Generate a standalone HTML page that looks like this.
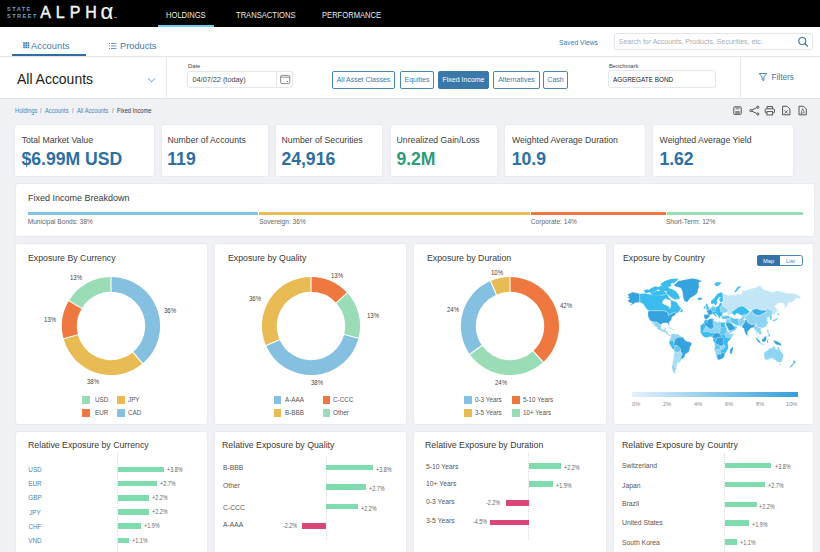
<!DOCTYPE html>
<html><head><meta charset="utf-8">
<style>
*{margin:0;padding:0;box-sizing:border-box}
html,body{width:820px;height:552px;overflow:hidden}
body{background:#eff1f5;font-family:"Liberation Sans",sans-serif;position:relative;color:#333}
.a{position:absolute;white-space:nowrap}
#hdr{left:0;top:0;width:820px;height:27px;background:#000}
.nav{color:#ececec;font-size:8.3px;top:10px;transform:scaleX(0.915);transform-origin:0 0}
#tabs{left:0;top:27px;width:820px;height:30px;background:#fff;border-bottom:1px solid #e1e4e8}
#fbar{left:0;top:57px;width:820px;height:42px;background:#fff;border-bottom:1px solid #dfe2e7}
.card{position:absolute;background:#fff;border:1px solid #e8ebef;border-radius:3px}
.kl{top:135px;font-size:8.7px;color:#3d3d3d}
.kv{top:148.5px;font-size:17.6px;color:#2d6fa2;font-weight:bold}
.ttl{font-size:9px;color:#333}
.bc{top:107px;font-size:6.3px;transform:scaleX(0.91);transform-origin:0 0}
.bl{top:217.5px;font-size:6.6px;color:#666}
.ct{top:253px;font-size:9.2px;color:#3a3a3a;transform:scaleX(0.953);transform-origin:0 0}
.dl{width:30px;text-align:center;font-size:6.9px;line-height:9px;color:#444;transform:scaleX(0.88)}
.lg{font-size:7.1px;line-height:9px;color:#555;transform:scaleX(0.89);transform-origin:0 0}
.ml{top:399.5px;font-size:6px;line-height:8px;color:#8a8a8a;transform:scaleX(0.95);transform-origin:0 0}
.rl{font-size:7.9px;line-height:9px;color:#555;transform:scaleX(0.86);transform-origin:0 0}
.rlc{width:30px;text-align:center;font-size:7.5px;line-height:9px;color:#4a84b5;transform:scaleX(0.84)}
.vl{font-size:6.4px;line-height:8px;color:#666;transform:scaleX(0.85);transform-origin:0 0}
.btn{position:absolute;top:71px;height:18px;border:1px solid #4a86b4;border-radius:2px;color:#3a78ad;font-size:7px;line-height:16px;text-align:center}
</style></head><body>
<div id="hdr" class="a"></div>
<div class="a" style="left:7px;top:6px;font-size:5.6px;line-height:6.6px;color:#6ea3c4;font-weight:bold;letter-spacing:1.45px">STATE<br>STREET</div>
<div class="a" style="left:40.3px;top:3.5px;font-size:16px;line-height:17px;color:#f4f4f4;-webkit-text-stroke:0.45px #f4f4f4;letter-spacing:4.9px">ALPH</div>
<div class="a" style="left:100.5px;top:0.5px;font-size:22px;line-height:22px;color:#f4f4f4;-webkit-text-stroke:0.2px #f4f4f4">&#945;</div>
<div class="a" style="left:114px;top:17px;width:3px;height:1px;background:#777"></div>
<div class="a nav" style="left:166px">HOLDINGS</div>
<div class="a nav" style="left:235.5px">TRANSACTIONS</div>
<div class="a nav" style="left:322px">PERFORMANCE</div>
<div class="a" style="left:158px;top:24.6px;width:56px;height:2.4px;background:#6ccaf2"></div>
<div id="tabs" class="a"></div>
<svg class="a" style="left:23px;top:42.4px" width="7" height="7" viewBox="0 0 7 7" fill="#3b7cb3"><rect x="0.20" y="0.20" width="1.7" height="1.7"/><rect x="0.20" y="2.35" width="1.7" height="1.7"/><rect x="0.20" y="4.50" width="1.7" height="1.7"/><rect x="2.35" y="0.20" width="1.7" height="1.7"/><rect x="2.35" y="2.35" width="1.7" height="1.7"/><rect x="2.35" y="4.50" width="1.7" height="1.7"/><rect x="4.50" y="0.20" width="1.7" height="1.7"/><rect x="4.50" y="2.35" width="1.7" height="1.7"/><rect x="4.50" y="4.50" width="1.7" height="1.7"/></svg>
<div class="a" style="left:31px;top:39.5px;font-size:9.8px;color:#3b7cb3;transform:scaleX(0.953);transform-origin:0 0">Accounts</div>
<div class="a" style="left:12px;top:53.5px;width:74px;height:2.5px;background:#2f6ea5"></div>
<svg class="a" style="left:108.5px;top:42.5px" width="8" height="6" viewBox="0 0 8 6" fill="#5b8fbd"><rect x="0" y="0" width="1" height="1"/><rect x="0" y="2.5" width="1" height="1"/><rect x="0" y="5" width="1" height="1"/><rect x="2" y="0" width="5.5" height="0.9"/><rect x="2" y="2.5" width="5.5" height="0.9"/><rect x="2" y="5" width="5.5" height="0.9"/></svg>
<div class="a" style="left:119.5px;top:39.5px;font-size:9.8px;color:#3b7cb3;transform:scaleX(0.943);transform-origin:0 0">Products</div>
<div class="a" style="left:558.5px;top:38px;font-size:7.6px;color:#3b7cb3;transform:scaleX(0.89);transform-origin:0 0">Saved Views</div>
<div class="a" style="left:614.3px;top:32.5px;width:198.5px;height:17.6px;border:1px solid #e3e6ea;border-radius:3px"></div>
<div class="a" style="left:618.8px;top:37.6px;font-size:7px;color:#a9adb2">Search for Accounts, Products, Securities, etc.</div>
<svg class="a" style="left:796px;top:35px" width="13" height="13" viewBox="0 0 13 13"><circle cx="6.3" cy="6" r="3.5" fill="none" stroke="#3a78ad" stroke-width="1.15"/><line x1="8.9" y1="8.6" x2="11.4" y2="11" stroke="#3a78ad" stroke-width="1.3" stroke-linecap="round"/></svg>
<div id="fbar" class="a"></div>
<div class="a" style="left:166px;top:57px;width:1px;height:42px;background:#e6e9ed"></div>
<div class="a" style="left:740px;top:57px;width:1px;height:42px;background:#e6e9ed"></div>
<div class="a" style="left:17px;top:70px;font-size:15.5px;color:#222;transform:scaleX(0.9);transform-origin:0 0">All Accounts</div>
<svg class="a" style="left:146px;top:75px" width="11" height="8" viewBox="0 0 11 8"><polyline points="2,3.2 5.6,6.8 9.2,3.2" fill="none" stroke="#4a86b4" stroke-width="0.85"/></svg>
<div class="a" style="left:188px;top:62.5px;font-size:5.8px;color:#444">Date</div>
<div class="a" style="left:187.3px;top:70.8px;width:105.9px;height:17.6px;border:1px solid #e3e6ea;border-radius:3px"></div>
<div class="a" style="left:276px;top:71px;width:1px;height:17.4px;background:#e6e8ec"></div>
<div class="a" style="left:192.5px;top:75px;font-size:7.3px;color:#444">04/07/22 (today)</div>
<svg class="a" style="left:279px;top:73px" width="12" height="12" viewBox="0 0 12 12"><rect x="1.6" y="2.4" width="9.2" height="8.2" rx="1.3" fill="none" stroke="#707070" stroke-width="0.8"/><line x1="1.6" y1="4.2" x2="10.8" y2="4.2" stroke="#707070" stroke-width="0.8"/><rect x="7.6" y="8" width="1.4" height="0.9" fill="#606060"/></svg>
<div class="btn" style="left:332px;width:63px">All Asset Classes</div>
<div class="btn" style="left:400px;width:34px">Equities</div>
<div class="btn" style="left:438px;width:51px;background:#3a78aa;border-color:#3a78aa;color:#fff">Fixed Income</div>
<div class="btn" style="left:493px;width:47px">Alternatives</div>
<div class="btn" style="left:543px;width:25px">Cash</div>
<div class="a" style="left:609px;top:62.5px;font-size:5.8px;color:#444">Benchmark</div>
<div class="a" style="left:608.3px;top:70.2px;width:107.5px;height:18px;border:1px solid #e3e6ea;border-radius:3px"></div>
<div class="a" style="left:613.2px;top:74.8px;font-size:7.5px;color:#222;transform:scaleX(0.85);transform-origin:0 0">AGGREGATE BOND</div>
<svg class="a" style="left:758px;top:72px" width="10" height="10" viewBox="0 0 10 10"><path d="M1.2 1.5 H8.8 L5.9 5 V8.6 L4.1 7.6 V5 Z" fill="none" stroke="#3a78ad" stroke-width="0.9" stroke-linejoin="round"/></svg>
<div class="a" style="left:771.5px;top:72.8px;font-size:8.2px;color:#3a78ad">Filters</div>

<!-- breadcrumb -->
<div class="a bc" style="left:14.6px;color:#4a84b5">Holdings</div>
<div class="a bc" style="left:40px;color:#777">/</div>
<div class="a bc" style="left:45.1px;color:#4a84b5">Accounts</div>
<div class="a bc" style="left:72.4px;color:#777">/</div>
<div class="a bc" style="left:77.1px;color:#4a84b5">All Accounts</div>
<div class="a bc" style="left:112.1px;color:#777">/</div>
<div class="a bc" style="left:117px;color:#333">Fixed Income</div>
<!-- toolbar icons -->
<svg class="a" style="left:732px;top:105px" width="78" height="11" viewBox="0 0 78 11">
 <g fill="none" stroke="#555" stroke-width="1">
  <rect x="1.8" y="1.8" width="7.4" height="7.6" rx="0.8"/>
  <rect x="3.5" y="1.8" width="4" height="2.6" fill="#999" stroke="none"/>
  <rect x="3.3" y="6" width="4.4" height="3.4" fill="#888" stroke="none"/>
  <circle cx="18.8" cy="5.6" r="1.1"/><circle cx="25.8" cy="2.2" r="1.1"/><circle cx="25.8" cy="9" r="1.1"/>
  <line x1="19.8" y1="5" x2="24.8" y2="2.7"/><line x1="19.8" y1="6.2" x2="24.8" y2="8.5"/>
  <path d="M35 3.8 V1.6 H40.6 V3.8"/><rect x="33.2" y="3.8" width="9.2" height="4.2" rx="1"/><rect x="35" y="6.6" width="5.6" height="3.3" fill="#fff"/>
  <path d="M50.6 1.3 H55.2 L57.9 4 V9.8 H50.6 Z"/><path d="M52.4 5.2 L55.8 8.6 M55.8 5.2 L52.4 8.6" stroke-width="0.8"/>
  <path d="M67 1.3 H71.6 L74.3 4 V9.8 H67 Z"/><path d="M70.6 3.5 L69 8.6 L72.4 7.4 Z" stroke-width="0.7"/>
 </g>
</svg>

<!-- KPI cards -->
<div class="card" style="left:14px;top:124px;width:141px;height:53px"></div>
<div class="card" style="left:161px;top:124px;width:108px;height:53px"></div>
<div class="card" style="left:275px;top:124px;width:108px;height:53px"></div>
<div class="card" style="left:390px;top:124px;width:108px;height:53px"></div>
<div class="card" style="left:504px;top:124px;width:142px;height:53px"></div>
<div class="card" style="left:652px;top:124px;width:142px;height:53px"></div>

<div class="a kl" style="left:21.7px">Total Market Value</div>
<div class="a kv" style="left:21.5px">$6.99M USD</div>
<div class="a kl" style="left:167.5px">Number of Accounts</div>
<div class="a kv" style="left:167.3px">119</div>
<div class="a kl" style="left:281.6px">Number of Securities</div>
<div class="a kv" style="left:281.4px">24,916</div>
<div class="a kl" style="left:396.6px">Unrealized Gain/Loss</div>
<div class="a kv" style="left:396.4px;color:#2e9a78">9.2M</div>
<div class="a kl" style="left:512px">Weighted Average Duration</div>
<div class="a kv" style="left:511.8px">10.9</div>
<div class="a kl" style="left:659.6px">Weighted Average Yield</div>
<div class="a kv" style="left:659.4px">1.62</div>

<div class="card" style="left:15px;top:183px;width:800px;height:54px"></div>
<div class="a" style="left:27.7px;top:192px;font-size:9.4px;color:#3a3a3a;transform:scaleX(0.96);transform-origin:0 0">Fixed Income Breakdown</div>
<div class="a" style="left:27.7px;top:212px;width:230.5px;height:3px;background:#85c1e3"></div>
<div class="a" style="left:259px;top:212px;width:270.5px;height:3px;background:#e8bb55"></div>
<div class="a" style="left:530.8px;top:212px;width:135.2px;height:3px;background:#ee7840"></div>
<div class="a" style="left:667.4px;top:212px;width:135.5px;height:3px;background:#99dcb6"></div>
<div class="a bl" style="left:27.7px">Municipal Bonds: 38%</div>
<div class="a bl" style="left:259.2px">Sovereign: 36%</div>
<div class="a bl" style="left:530.8px">Corporate: 14%</div>
<div class="a bl" style="left:665.9px">Short-Term: 12%</div>

<div class="card" style="left:15px;top:243px;width:193px;height:182px"></div>
<div class="card" style="left:214px;top:243px;width:193px;height:182px"></div>
<div class="card" style="left:413px;top:243px;width:194px;height:182px"></div>
<div class="card" style="left:613px;top:243px;width:201px;height:182px"></div>

<!--CHARTS-->
<div class="a ct" style="left:27.8px">Exposure By Currency</div>
<div class="a ct" style="left:227.9px">Exposure by Quality</div>
<div class="a ct" style="left:426.9px">Exposure by Duration</div>
<div class="a ct" style="left:622.5px">Exposure by Country</div>
<svg class="a" style="left:55.5px;top:271.1px" width="110" height="110" viewBox="55.5 271.1 110 110">
<path d="M110.50 277.00A49.1 49.1 0 0 1 142.06 363.71L132.48 352.30A34.2 34.2 0 0 0 110.50 291.90Z" fill="#85c0e0"/>
<path d="M142.06 363.71A49.1 49.1 0 0 1 63.07 338.81L77.47 334.95A34.2 34.2 0 0 0 132.48 352.30Z" fill="#e8bb55"/>
<path d="M63.07 338.81A49.1 49.1 0 0 1 68.41 300.81L81.18 308.49A34.2 34.2 0 0 0 77.47 334.95Z" fill="#ee7840"/>
<path d="M68.41 300.81A49.1 49.1 0 0 1 110.50 277.00L110.50 291.90A34.2 34.2 0 0 0 81.18 308.49Z" fill="#99dcb5"/>
<line x1="110.50" y1="292.90" x2="110.50" y2="276.00" stroke="#fff" stroke-width="1.1"/>
<line x1="131.84" y1="351.53" x2="142.70" y2="364.48" stroke="#fff" stroke-width="1.1"/>
<line x1="78.43" y1="334.69" x2="62.11" y2="339.07" stroke="#fff" stroke-width="1.1"/>
<line x1="82.04" y1="309.00" x2="67.56" y2="300.30" stroke="#fff" stroke-width="1.1"/>
</svg>
<svg class="a" style="left:255.5px;top:271.2px" width="110" height="110" viewBox="255.5 271.2 110 110">
<path d="M310.50 277.10A49.1 49.1 0 0 1 346.70 293.03L335.71 303.09A34.2 34.2 0 0 0 310.50 292.00Z" fill="#ee7840"/>
<path d="M346.70 293.03A49.1 49.1 0 0 1 358.04 338.49L343.61 334.76A34.2 34.2 0 0 0 335.71 303.09Z" fill="#99dcb5"/>
<path d="M358.04 338.49A49.1 49.1 0 0 1 265.47 345.78L279.14 339.84A34.2 34.2 0 0 0 343.61 334.76Z" fill="#85c0e0"/>
<path d="M265.47 345.78A49.1 49.1 0 0 1 310.50 277.10L310.50 292.00A34.2 34.2 0 0 0 279.14 339.84Z" fill="#e8bb55"/>
<line x1="310.50" y1="293.00" x2="310.50" y2="276.10" stroke="#fff" stroke-width="1.1"/>
<line x1="334.98" y1="303.77" x2="347.44" y2="292.35" stroke="#fff" stroke-width="1.1"/>
<line x1="342.64" y1="334.51" x2="359.00" y2="338.74" stroke="#fff" stroke-width="1.1"/>
<line x1="280.05" y1="339.44" x2="264.56" y2="346.18" stroke="#fff" stroke-width="1.1"/>
</svg>
<svg class="a" style="left:454.8px;top:271.3px" width="110" height="110" viewBox="454.8 271.3 110 110">
<path d="M509.80 277.20A49.1 49.1 0 0 1 543.03 362.44L532.95 351.47A34.2 34.2 0 0 0 509.80 292.10Z" fill="#ee7840"/>
<path d="M543.03 362.44A49.1 49.1 0 0 1 469.58 354.46L481.79 345.92A34.2 34.2 0 0 0 532.95 351.47Z" fill="#99dcb5"/>
<path d="M469.58 354.46A49.1 49.1 0 0 1 490.22 281.27L496.16 294.94A34.2 34.2 0 0 0 481.79 345.92Z" fill="#85c0e0"/>
<path d="M490.22 281.27A49.1 49.1 0 0 1 509.80 277.20L509.80 292.10A34.2 34.2 0 0 0 496.16 294.94Z" fill="#e8bb55"/>
<line x1="509.80" y1="293.10" x2="509.80" y2="276.20" stroke="#fff" stroke-width="1.1"/>
<line x1="532.27" y1="350.74" x2="543.71" y2="363.18" stroke="#fff" stroke-width="1.1"/>
<line x1="482.60" y1="345.34" x2="468.76" y2="355.04" stroke="#fff" stroke-width="1.1"/>
<line x1="496.56" y1="295.85" x2="489.82" y2="280.36" stroke="#fff" stroke-width="1.1"/>
</svg>

<div class="a dl" style="left:61.0px;top:273.4px">13%</div>
<div class="a dl" style="left:154.5px;top:305.5px">36%</div>
<div class="a dl" style="left:35.1px;top:314.7px">13%</div>
<div class="a dl" style="left:78.0px;top:376.9px">38%</div>
<div class="a dl" style="left:321.7px;top:270.6px">13%</div>
<div class="a dl" style="left:357.5px;top:311.2px">13%</div>
<div class="a dl" style="left:239.8px;top:294.0px">36%</div>
<div class="a dl" style="left:302.4px;top:377.7px">38%</div>
<div class="a dl" style="left:482.4px;top:267.5px">10%</div>
<div class="a dl" style="left:551.2px;top:300.9px">42%</div>
<div class="a dl" style="left:437.7px;top:305.3px">24%</div>
<div class="a dl" style="left:485.9px;top:377.6px">24%</div>
<div class="a" style="left:82.2px;top:396.2px;width:7.6px;height:7.6px;background:#99dcb5"></div><div class="a lg" style="left:94.8px;top:396.4px">USD</div>
<div class="a" style="left:117.4px;top:396.2px;width:7.6px;height:7.6px;background:#e8bb55"></div><div class="a lg" style="left:128.3px;top:396.4px">JPY</div>
<div class="a" style="left:82.2px;top:409.0px;width:7.6px;height:7.6px;background:#ee7840"></div><div class="a lg" style="left:94.8px;top:409.2px">EUR</div>
<div class="a" style="left:117.4px;top:409.0px;width:7.6px;height:7.6px;background:#85c0e0"></div><div class="a lg" style="left:128.3px;top:409.2px">CAD</div>
<div class="a" style="left:273.7px;top:396.2px;width:7.6px;height:7.6px;background:#85c0e0"></div><div class="a lg" style="left:284.5px;top:396.4px">A-AAA</div>
<div class="a" style="left:322.9px;top:396.2px;width:7.6px;height:7.6px;background:#ee7840"></div><div class="a lg" style="left:333.0px;top:396.4px">C-CCC</div>
<div class="a" style="left:273.7px;top:409.0px;width:7.6px;height:7.6px;background:#e8bb55"></div><div class="a lg" style="left:284.5px;top:409.2px">B-BBB</div>
<div class="a" style="left:322.9px;top:409.0px;width:7.6px;height:7.6px;background:#99dcb5"></div><div class="a lg" style="left:333.0px;top:409.2px">Other</div>
<div class="a" style="left:464.0px;top:396.2px;width:7.6px;height:7.6px;background:#85c0e0"></div><div class="a lg" style="left:475.0px;top:396.4px">0-3 Years</div>
<div class="a" style="left:512.2px;top:396.2px;width:7.6px;height:7.6px;background:#ee7840"></div><div class="a lg" style="left:523.2px;top:396.4px">5-10 Years</div>
<div class="a" style="left:464.0px;top:409.0px;width:7.6px;height:7.6px;background:#e8bb55"></div><div class="a lg" style="left:475.0px;top:409.2px">3-5 Years</div>
<div class="a" style="left:512.2px;top:409.0px;width:7.6px;height:7.6px;background:#99dcb5"></div><div class="a lg" style="left:523.2px;top:409.2px">10+ Years</div>
<!--/CHARTS-->
<!--MAP-->
<div class="a" style="left:756.6px;top:255px;width:46px;height:11px;border:1px solid #4a84b5;border-radius:2.5px;background:#fff"></div>
<div class="a" style="left:756.6px;top:255px;width:23.6px;height:11px;border-radius:2.5px 0 0 2.5px;background:#3473a8"></div>
<div class="a" style="left:762.5px;top:256.5px;font-size:6px;line-height:8px;color:#fff;transform:scaleX(0.95);transform-origin:0 0">Map</div>
<div class="a" style="left:786px;top:256.5px;font-size:6px;line-height:8px;color:#4a84b5;transform:scaleX(0.95);transform-origin:0 0">List</div>
<svg class="a" style="left:0;top:0" width="820" height="552" viewBox="0 0 820 552"><g stroke="#fff" stroke-width="0.3" stroke-linejoin="round"><path d="M639.8 293.7L632.5 292.0L627.6 294.4L629.0 296.7L626.6 297.5L630.0 298.5L628.1 300.2L628.6 302.3L632.0 303.3L629.5 305.9L632.9 304.3L635.4 302.7L639.8 302.2Z" fill="#36a3df"/><path d="M639.8 293.7L645.1 293.3L652.5 294.8L662.2 295.3L667.1 293.8L668.6 297.1L671.5 300.2L676.9 302.3L678.8 305.5L681.3 308.5L679.3 311.4L677.4 313.1L675.9 313.8L674.4 312.1L672.0 313.5L670.0 314.5L668.1 315.5L668.1 312.8L665.2 311.2L662.2 310.7L648.6 310.7L646.1 308.5L643.7 304.7L641.7 303.1L639.8 302.2Z" fill="#3bbcee"/><path d="M679.8 311.7L682.7 312.4L682.8 310.3L681.5 308.8Z" fill="#3bbcee"/><path d="M661.0 284.5L665.0 281.5L671.0 279.6L677.5 279.1L675.0 281.5L673.0 283.5L670.0 286.0L666.0 287.0Z" fill="#3bbcee" stroke="#3bbcee" stroke-width="1.2"/><path d="M657.5 287.8L662.0 286.2L668.0 287.6L670.0 289.6L666.0 290.6L660.0 290.2Z" fill="#3bbcee" stroke="#3bbcee" stroke-width="1.2"/><path d="M648.5 291.0L652.0 288.2L656.0 286.8L658.0 288.8L655.0 291.0L651.0 292.5Z" fill="#3bbcee" stroke="#3bbcee" stroke-width="1.2"/><path d="M651.5 293.6L657.0 291.6L663.0 291.6L666.2 293.4L660.0 294.7L654.0 294.9Z" fill="#3bbcee" stroke="#3bbcee" stroke-width="1.2"/><path d="M667.0 291.2L671.0 289.2L675.0 291.5L678.0 295.0L679.0 298.5L675.0 299.0L671.0 296.5L668.0 294.0Z" fill="#3bbcee" stroke="#3bbcee" stroke-width="1.2"/><path d="M644.5 290.8L647.8 289.8L648.8 291.8L645.8 292.4Z" fill="#3bbcee" stroke="#3bbcee" stroke-width="1.2"/><path d="M670.5 284.0L673.5 282.8L672.0 285.5Z" fill="#fff"/><path d="M662.2 303.1L665.6 305.1L668.6 306.3L670.0 308.5L671.0 305.5L670.5 300.2L667.6 299.8L665.6 298.5L663.2 300.6Z" fill="#fff"/><path d="M648.6 310.7L662.2 310.7L665.2 311.2L668.1 312.8L668.1 315.5L670.0 314.5L672.0 313.5L674.4 312.1L675.9 313.8L674.4 315.8L672.5 316.4L671.5 318.7L671.5 319.9L669.1 322.1L669.5 324.8L669.1 325.9L668.3 324.3L667.6 323.0L665.2 322.9L662.7 323.3L661.2 324.5L660.0 324.5L657.8 323.3L656.6 321.9L654.4 322.2L651.5 321.5L649.8 320.3L648.1 316.8L647.8 312.8Z" fill="#36a3df"/><path d="M651.5 321.5L654.4 322.2L656.6 321.9L657.8 323.3L660.0 324.5L661.2 324.5L661.0 327.7L662.2 329.7L664.2 329.5L664.4 328.3L666.1 328.0L665.6 331.1L667.6 331.2L667.8 333.9L669.8 334.8L670.9 335.3L670.0 335.9L669.1 335.9L666.9 334.5L665.9 332.8L663.7 332.0L661.7 331.3L657.3 329.1L656.9 327.1L654.9 326.6L653.9 323.9L652.7 322.7L653.7 324.8L654.9 327.1L653.9 326.3L652.5 324.2Z" fill="#8fd4f2"/><path d="M667.1 327.8L669.5 327.0L672.4 328.7L670.8 329.0L668.6 328.0Z" fill="#8fd4f2"/><path d="M672.2 329.0L675.2 329.7L673.7 330.2L672.2 329.8Z" fill="#8fd4f2"/><path d="M673.7 285.3L678.3 281.0L687.0 279.2L692.2 278.3L697.5 279.2L702.1 281.0L698.6 282.7L699.2 286.8L698.0 289.7L697.5 293.1L694.0 296.0L690.0 298.3L687.0 302.4L684.1 300.7L683.0 296.6L682.4 291.4L680.7 287.9L675.4 286.5Z" fill="#36a3df"/><path d="M697.3 298.2L700.0 297.4L702.3 297.8L701.5 299.8L698.5 300.2Z" fill="#36a3df"/><path d="M670.9 335.3L671.7 334.2L673.4 333.4L675.4 334.2L678.3 334.2L679.3 335.3L681.7 336.7L683.5 337.5L684.2 339.2L685.2 340.5L687.1 341.4L689.6 341.9L691.5 343.0L691.5 345.0L689.8 347.2L689.6 349.7L688.6 352.3L686.6 353.2L684.9 354.6L684.9 356.1L682.7 359.1L681.0 359.9L680.3 361.9L678.3 362.6L676.9 363.9L676.9 366.5L675.6 367.6L676.6 368.6L674.9 370.8L675.2 371.9L675.9 373.7L673.9 373.4L672.5 370.0L671.7 367.2L672.7 363.9L672.7 361.3L673.7 357.0L674.2 352.9L674.3 350.3L672.0 348.3L670.3 345.2L669.0 342.8L669.3 340.3L669.8 339.5L670.6 338.1L670.9 336.1Z" fill="#8fd4f2"/><path d="M679.3 337.2L683.5 337.5L684.2 339.2L685.2 340.5L687.1 341.4L689.6 341.9L691.5 343.0L691.5 345.0L689.8 347.2L689.6 349.7L688.6 352.3L686.6 353.2L684.9 354.6L684.9 356.1L682.7 359.1L680.5 357.0L681.7 355.2L682.2 354.0L680.3 351.1L680.5 348.9L679.1 347.5L676.9 345.5L674.4 346.1L673.0 344.1L674.4 342.2L674.7 339.5L675.9 338.9L677.4 337.8Z" fill="#36a3df"/><path d="M669.0 342.8L670.3 345.2L672.0 348.3L674.3 350.3L674.9 348.3L674.9 346.1L673.0 344.1L674.4 342.2L672.0 340.5L670.5 340.5Z" fill="#3bbcee"/><path d="M675.4 352.3L677.8 352.3L680.3 351.1L682.2 354.0L680.5 357.0L679.3 358.8L678.3 362.6L676.9 363.9L676.9 366.5L674.4 366.5L673.7 357.0L674.2 352.9Z" fill="#a6ddf4"/><path d="M674.3 350.3L675.4 352.3L677.8 352.3L680.3 351.1L680.5 348.9L679.1 347.5L676.9 345.5L674.9 346.1L674.9 348.3Z" fill="#5fc6f0"/><path d="M703.9 314.8L704.2 317.7L705.7 319.2L707.6 318.8L708.6 317.4L710.1 315.5L710.3 314.6L711.5 314.8L713.0 313.9L714.7 315.6L716.4 317.9L716.1 316.4L717.6 316.6L716.4 315.5L714.9 313.1L715.9 313.8L718.1 315.8L718.6 317.4L719.8 318.7L720.3 316.4L721.3 316.2L722.7 316.0L722.2 314.5L723.0 313.2L723.5 312.4L724.7 312.8L727.1 312.1L728.1 311.4L727.9 308.5L725.7 307.4L724.2 306.6L722.2 305.5L722.2 304.3L722.2 302.7L720.1 302.7L719.1 304.3L718.8 305.5L717.4 306.4L715.4 307.0L713.7 306.8L713.0 304.9L712.5 306.6L711.0 307.5L710.0 309.0L709.3 309.6L707.9 310.3L706.4 311.0L707.9 312.8L707.9 314.5Z" fill="#3bbcee"/><path d="M707.9 314.5L707.9 312.8L706.4 311.0L707.9 310.3L709.3 309.6L710.0 309.0L711.5 310.3L712.5 311.4L712.2 314.1L710.3 314.6L710.1 315.5Z" fill="#36a3df"/><path d="M703.9 314.8L704.2 317.7L705.7 319.2L707.6 318.8L708.6 317.4L710.1 315.5L707.9 314.5Z" fill="#36a3df"/><path d="M711.5 310.3L712.5 311.4L713.5 311.7L714.9 311.7L715.9 309.2L715.4 307.0L713.7 306.8L712.5 306.6L711.5 308.5Z" fill="#5fc6f0"/><path d="M720.1 308.5L720.3 311.4L723.0 313.2L723.5 312.4L724.7 312.8L727.1 312.1L728.1 311.4L727.9 308.5L725.7 307.4L724.2 306.6L722.2 305.5L720.3 306.3Z" fill="#8fd4f2"/><path d="M711.0 303.9L711.0 300.6L713.5 298.9L715.4 296.2L717.4 293.8L720.8 292.3L723.2 293.3L722.7 294.3L723.2 296.2L723.0 298.9L723.5 300.6L722.2 301.9L719.8 302.3L719.6 301.1L719.1 299.3L720.8 297.6L719.3 297.3L717.1 300.2L717.4 302.3L716.6 304.3L715.7 305.5L714.7 305.3L714.2 303.5L712.5 303.9Z" fill="#3bbcee"/><path d="M721.3 316.2L722.7 316.0L726.2 315.6L728.8 315.8L730.3 317.1L730.1 318.7L726.2 319.0L723.2 319.1L721.8 318.7Z" fill="#5fc6f0"/><path d="M705.9 310.0L709.4 309.2L709.4 307.9L707.9 306.3L707.6 304.3L706.1 303.4L705.4 305.1L706.1 306.6L706.4 307.5L706.0 308.7Z" fill="#3bbcee"/><path d="M703.7 308.8L705.7 308.5L705.7 306.6L704.7 306.1L703.7 307.0Z" fill="#3bbcee"/><path d="M714.0 284.1L716.9 282.0L721.8 282.3L719.3 285.3L716.4 286.5Z" fill="#3bbcee"/><path d="M734.0 292.3L735.9 289.2L737.9 286.5L741.8 286.1L738.8 288.7L735.9 292.3Z" fill="#3bbcee"/><path d="M722.2 293.8L724.7 294.0L728.6 295.7L730.1 294.8L734.4 295.3L737.9 293.8L741.8 294.3L741.8 290.3L743.7 290.5L745.2 290.8L747.6 289.8L751.0 288.7L757.4 287.0L759.8 285.3L763.7 289.8L767.1 290.3L772.0 292.3L776.9 290.8L781.8 291.8L786.7 293.3L791.5 293.3L796.4 294.3L799.8 296.2L801.3 297.1L798.9 298.5L796.4 298.0L795.0 300.2L791.5 302.3L788.1 302.7L787.6 305.1L784.7 309.2L784.5 304.7L782.8 303.0L778.4 302.9L774.5 306.4L776.9 308.5L777.4 311.0L774.5 314.5L772.5 315.1L772.3 313.5L773.5 311.2L770.6 310.0L767.1 308.1L765.7 310.2L761.3 310.3L756.4 308.5L751.5 310.3L747.6 309.4L744.2 307.0L742.3 306.0L738.4 307.0L735.4 309.2L732.0 311.4L731.5 313.5L728.6 315.8L728.1 314.5L727.1 312.1L728.1 311.4L727.9 308.5L725.7 307.4L724.2 306.6L722.2 305.5L722.2 304.3L722.2 302.7L723.5 300.6L723.0 298.9L723.2 296.2L722.7 294.3Z" fill="#c2e6f5"/><path d="M731.5 313.5L732.0 311.4L735.4 309.2L738.4 307.0L742.3 306.0L744.2 307.0L747.6 309.4L750.1 312.1L747.6 313.5L747.6 315.1L744.7 314.8L742.3 315.8L740.8 315.1L736.9 313.1L734.4 315.5L733.0 313.8Z" fill="#3bbcee"/><path d="M751.5 310.3L756.4 308.5L761.3 310.3L765.7 310.2L766.7 312.1L763.2 313.5L759.8 315.8L755.9 315.1L753.0 313.5Z" fill="#3ab0e8"/><path d="M744.7 317.1L747.6 315.1L750.1 312.1L751.5 310.3L753.0 313.5L755.9 315.1L759.8 315.8L763.2 313.5L766.7 312.1L765.7 310.2L767.1 308.1L770.6 310.0L773.5 311.2L772.3 313.5L772.5 315.1L769.1 316.8L767.9 317.4L766.2 317.7L768.1 318.7L766.9 319.9L768.1 322.4L767.6 324.2L765.7 326.8L762.3 328.3L761.3 328.0L760.3 327.4L758.4 327.7L756.4 326.6L756.2 324.2L753.5 324.3L752.0 324.2L750.6 324.2L748.1 322.9L747.1 321.5L746.6 319.6L744.7 318.7Z" fill="#8fd4f2"/><path d="M726.2 319.0L730.1 318.7L730.3 317.1L732.0 317.7L734.4 318.7L737.4 318.4L738.4 319.0L740.8 318.5L742.3 315.8L744.7 314.8L747.6 315.1L744.7 317.1L744.7 318.7L743.5 319.0L744.7 320.3L745.2 321.5L743.2 324.2L741.3 326.3L738.6 325.9L736.4 325.5L736.2 324.8L734.0 324.3L733.0 323.0L732.0 323.0L731.8 323.6L732.3 324.2L733.0 325.1L733.7 326.0L735.9 325.3L737.6 327.4L735.4 330.3L734.0 331.0L730.5 332.9L729.6 332.8L727.6 328.0L725.7 324.2L725.4 322.1Z" fill="#8fd4f2"/><path d="M730.1 318.7L730.3 317.1L732.0 317.7L734.4 318.7L737.4 318.4L738.4 319.0L738.4 322.4L739.3 325.7L736.4 325.5L736.2 324.8L734.0 324.3L733.0 323.0L732.0 323.0Z" fill="#5fc6f0"/><path d="M726.4 323.3L727.6 321.8L730.1 323.3L731.8 323.6L732.3 324.2L733.0 325.1L733.7 326.3L735.7 327.4L735.4 328.9L734.0 329.4L731.5 330.6L729.6 330.3L728.8 330.3L727.6 328.0L725.7 324.2Z" fill="#36a3df"/><path d="M741.8 326.8L743.2 324.2L745.2 321.5L744.7 320.3L746.6 319.6L747.1 321.5L748.1 322.9L751.5 324.5L752.0 324.8L753.5 324.3L755.9 324.2L754.9 325.4L753.5 327.7L752.0 327.7L751.0 328.0L749.6 329.7L747.6 331.7L747.6 334.2L746.4 335.6L745.7 334.2L744.2 330.6L744.0 328.3L742.7 328.0Z" fill="#36a3df"/><path d="M747.6 334.6L748.6 335.9L748.1 336.7L747.5 335.9Z" fill="#36a3df"/><path d="M753.5 327.7L754.9 325.4L756.2 324.2L756.4 326.6L758.4 327.7L760.3 327.4L761.3 328.0L760.6 329.7L761.8 332.3L761.8 333.7L759.8 335.3L758.6 333.1L757.4 332.5L756.9 334.5L757.6 336.1L758.8 337.5L759.1 339.2L757.9 338.5L756.7 335.6L756.4 333.4L756.2 330.6L754.7 330.8L754.5 329.1Z" fill="#8fd4f2"/><path d="M755.1 337.0L756.4 337.8L758.8 340.0L760.3 341.6L760.3 343.3L758.4 342.2L756.4 339.5Z" fill="#36a3df"/><path d="M760.1 343.3L764.5 344.1L764.5 344.7L760.3 344.1Z" fill="#36a3df"/><path d="M761.8 339.2L763.0 338.6L765.7 336.1L766.7 337.2L766.2 339.5L765.4 341.4L764.2 342.2L762.3 341.6Z" fill="#36a3df"/><path d="M766.9 339.7L769.6 339.2L767.6 340.5L768.6 342.5L767.4 343.0L766.9 341.6Z" fill="#36a3df"/><path d="M772.5 340.5L775.9 340.8L777.4 341.4L780.6 343.3L781.8 345.8L778.4 345.0L775.9 344.4L774.0 341.9Z" fill="#36a3df"/><path d="M767.1 329.7L768.4 330.0L768.1 332.3L769.1 333.1L770.1 335.6L769.8 336.7L768.1 336.1L768.9 334.2L767.4 332.3Z" fill="#3bbcee"/><path d="M772.0 322.4L772.5 320.6L774.5 319.6L776.9 318.4L777.9 316.8L777.6 313.1L779.6 314.5L777.9 315.6L777.9 317.4L777.4 319.3L776.4 320.1L774.7 320.9L773.0 321.1Z" fill="#3bbcee"/><path d="M767.4 327.4L767.9 325.9L768.1 326.6L767.6 327.7Z" fill="#3bbcee"/><path d="M769.3 316.8L770.3 318.7L770.2 320.3L771.6 319.8L771.8 318.7L771.3 317.7L772.0 315.1L770.6 315.8Z" fill="#3bbcee"/><path d="M777.9 312.8L778.6 310.7L778.4 307.0L778.1 307.0L777.9 310.0Z" fill="#c2e6f5"/><path d="M700.3 328.3L700.5 325.1L702.2 324.2L703.9 322.7L703.9 321.2L705.7 319.4L707.6 319.9L710.0 318.8L713.5 318.6L714.0 319.6L713.5 320.6L714.2 321.2L715.9 321.6L718.1 322.7L718.3 321.8L719.8 321.4L720.8 322.0L722.7 322.5L724.3 322.2L725.3 322.3L725.4 323.3L724.7 323.9L725.7 326.6L726.9 329.7L727.6 331.4L729.6 333.1L730.1 334.2L733.6 333.5L733.5 334.2L732.0 337.2L729.6 340.3L728.1 341.6L727.8 343.6L728.3 345.8L728.3 348.3L725.9 352.6L724.6 354.6L724.4 356.4L722.2 358.8L719.3 359.7L717.6 359.6L717.1 357.0L715.9 354.9L715.7 352.6L714.3 349.7L715.2 346.3L714.4 342.8L713.0 340.5L713.2 338.1L712.7 337.5L710.8 336.5L707.6 337.4L704.9 337.6L703.0 336.3L702.0 334.8L701.3 333.9L700.3 332.0L700.5 330.8Z" fill="#3bbcee"/><path d="M704.3 324.5L704.3 323.3L707.6 321.8L707.6 319.9L710.0 318.8L712.7 318.8L712.7 319.9L713.2 323.0L713.5 326.0L714.4 326.8L711.4 329.1L710.6 329.3L710.2 329.5L706.2 326.0Z" fill="#36a3df"/><path d="M713.5 326.0L713.2 323.0L714.2 321.2L715.9 321.6L718.1 322.7L718.3 321.8L719.8 321.4L720.8 322.0L720.8 328.9L720.3 329.1L715.9 327.1L714.4 326.8Z" fill="#8fd4f2"/><path d="M702.7 331.7L706.2 326.0L710.2 329.5L710.6 329.3L711.4 329.1L714.4 326.8L715.9 327.1L720.3 329.1L720.3 331.4L719.3 333.1L715.4 333.1L710.5 332.8L708.1 331.7Z" fill="#8fd4f2"/><path d="M720.3 331.4L720.3 327.7L720.8 327.7L726.5 327.7L726.9 329.7L726.2 332.8L725.2 334.8L723.2 334.5L720.3 335.0L719.3 333.1Z" fill="#5fc6f0"/><path d="M725.2 334.8L726.2 332.8L727.6 331.4L729.6 333.1L730.1 334.2L733.6 333.5L732.0 337.2L729.1 337.8L725.7 337.2Z" fill="#8fd4f2"/><path d="M714.7 343.0L717.6 337.4L722.0 337.2L723.7 338.8L723.2 340.5L723.0 343.3L723.6 344.5L722.5 346.1L720.3 346.1L719.3 345.3L717.1 344.4Z" fill="#36a3df"/><path d="M712.7 337.5L713.2 338.1L715.9 338.9L717.6 337.4L722.0 337.2L720.3 335.0L719.3 333.1L715.4 333.1L713.0 334.5Z" fill="#36a3df"/><path d="M715.2 346.3L714.4 342.8L717.1 344.4L719.3 345.3L720.3 346.1L720.3 349.7L714.3 349.7Z" fill="#5fc6f0"/><path d="M720.3 346.1L722.5 346.1L723.6 344.5L724.7 345.2L725.2 347.7L723.2 348.9L720.3 349.7Z" fill="#8fd4f2"/><path d="M714.3 349.7L720.3 349.7L720.8 354.4L718.3 353.9L716.6 356.1L715.9 354.9L715.7 352.6Z" fill="#8fd4f2"/><path d="M716.6 356.1L718.3 353.9L720.8 354.4L721.8 352.9L724.0 352.4L724.6 354.6L724.4 356.4L722.2 358.8L719.3 359.7L717.6 359.6L717.1 357.0Z" fill="#36a3df"/><path d="M730.1 349.2L731.5 348.0L732.7 346.6L733.2 348.6L731.8 353.9L730.5 354.3L729.8 352.3Z" fill="#36a3df"/><path d="M764.2 352.3L764.0 354.6L764.7 359.1L766.2 360.1L768.9 359.3L771.5 358.0L773.0 358.2L774.7 359.9L775.9 360.4L776.9 361.8L779.8 362.6L781.8 361.6L783.5 356.1L783.2 354.0L779.8 350.3L779.6 348.3L778.1 345.9L777.6 347.2L777.6 349.4L776.9 349.7L775.2 348.3L775.4 346.6L773.2 346.3L771.8 348.3L769.6 348.0L768.1 350.0Z" fill="#8fd4f2"/><path d="M779.1 363.8L781.0 363.8L780.7 365.3L779.8 365.6Z" fill="#8fd4f2"/><path d="M792.9 359.7L795.7 361.8L794.9 363.2L794.0 364.2L793.0 362.9L793.7 361.3Z" fill="#36a3df"/><path d="M789.8 367.1L792.8 363.6L793.6 364.3L792.0 366.2L790.6 367.7Z" fill="#36a3df"/></g></svg>
<div class="a" style="left:631.6px;top:392px;width:166.8px;height:5.4px;background:linear-gradient(90deg,#e2f2fb,#34a0da)"></div>
<div class="a ml" style="left:631.6px">0%</div>
<div class="a ml" style="left:662.9px">2%</div>
<div class="a ml" style="left:693.7px">4%</div>
<div class="a ml" style="left:725px">6%</div>
<div class="a ml" style="left:756px">8%</div>
<div class="a ml" style="left:786.4px">10%</div>
<!--/MAP-->
<div class="card" style="left:15px;top:431px;width:193px;height:140px"></div>
<div class="card" style="left:214px;top:431px;width:193px;height:140px"></div>
<div class="card" style="left:413px;top:431px;width:194px;height:140px"></div>
<div class="card" style="left:613px;top:431px;width:201px;height:140px"></div>
<!--BARS-->
<div class="a ct" style="left:27.7px;top:440px">Relative Exposure by Currency</div>
<div class="a" style="left:116.8px;top:453px;width:0;height:99px;border-left:1px dotted #d9d9d9"></div>
<div class="a rlc" style="left:20px;top:465.1px">USD</div>
<div class="a" style="left:117.5px;top:466.8px;width:46.4px;height:5.5px;background:#80dcae"></div>
<div class="a vl" style="left:166.9px;top:465.8px">+3.8%</div>
<div class="a rlc" style="left:20px;top:479.1px">EUR</div>
<div class="a" style="left:117.5px;top:480.8px;width:39.3px;height:5.5px;background:#80dcae"></div>
<div class="a vl" style="left:159.8px;top:479.8px">+2.7%</div>
<div class="a rlc" style="left:20px;top:493.4px">GBP</div>
<div class="a" style="left:117.5px;top:495.1px;width:31.2px;height:5.5px;background:#80dcae"></div>
<div class="a vl" style="left:151.7px;top:494.1px">+2.2%</div>
<div class="a rlc" style="left:20px;top:507.6px">JPY</div>
<div class="a" style="left:117.5px;top:509.3px;width:31.2px;height:5.5px;background:#80dcae"></div>
<div class="a vl" style="left:151.7px;top:508.3px">+2.2%</div>
<div class="a rlc" style="left:20px;top:521.6px">CHF</div>
<div class="a" style="left:117.5px;top:523.3px;width:23.5px;height:5.5px;background:#80dcae"></div>
<div class="a vl" style="left:144.0px;top:522.3px">+1.9%</div>
<div class="a rlc" style="left:20px;top:536.1px">VND</div>
<div class="a" style="left:117.5px;top:537.8px;width:11.8px;height:5.5px;background:#80dcae"></div>
<div class="a vl" style="left:132.3px;top:536.8px">+1.1%</div>
<div class="a rlc" style="left:20px;top:550.4px">CHF</div>
<div class="a" style="left:117.5px;top:552.1px;width:11.8px;height:5.5px;background:#80dcae"></div>
<div class="a vl" style="left:132.3px;top:551.1px">+1.1%</div>
<div class="a ct" style="left:221.5px;top:440px">Relative Exposure by Quality</div>
<div class="a" style="left:325.5px;top:456.6px;width:0;height:83.79999999999995px;border-left:1px dotted #d9d9d9"></div>
<div class="a rl" style="left:223.3px;top:463.3px">B-BBB</div>
<div class="a" style="left:326.0px;top:464.9px;width:46.6px;height:5.5px;background:#80dcae"></div>
<div class="a vl" style="left:376.3px;top:466.0px">+3.8%</div>
<div class="a rl" style="left:223.3px;top:481.3px">Other</div>
<div class="a" style="left:326.0px;top:484.0px;width:40.4px;height:5.5px;background:#80dcae"></div>
<div class="a vl" style="left:369.1px;top:484.5px">+2.7%</div>
<div class="a rl" style="left:223.3px;top:503.2px">C-CCC</div>
<div class="a" style="left:326.0px;top:503.7px;width:31.7px;height:5.5px;background:#80dcae"></div>
<div class="a vl" style="left:361.0px;top:504.9px">+2.2%</div>
<div class="a rl" style="left:223.3px;top:519.7px">A-AAA</div>
<div class="a" style="left:302.4px;top:523.0px;width:23.4px;height:5.5px;background:#dc4677"></div>
<div class="a vl" style="left:283.0px;top:522.4px">-2.2%</div>
<div class="a ct" style="left:424.7px;top:440px">Relative Exposure by Duration</div>
<div class="a" style="left:528.1px;top:453.3px;width:0;height:86.69999999999999px;border-left:1px dotted #d9d9d9"></div>
<div class="a rl" style="left:425.5px;top:461.6px">5-10 Years</div>
<div class="a" style="left:529.0px;top:463.2px;width:31.5px;height:5.5px;background:#80dcae"></div>
<div class="a vl" style="left:563.8px;top:464.1px">+2.2%</div>
<div class="a rl" style="left:425.5px;top:478.7px">10+ Years</div>
<div class="a" style="left:529.0px;top:481.2px;width:24.2px;height:5.5px;background:#80dcae"></div>
<div class="a vl" style="left:555.6px;top:481.7px">+1.9%</div>
<div class="a rl" style="left:425.5px;top:497.4px">0-3 Years</div>
<div class="a" style="left:505.6px;top:500.0px;width:23.0px;height:5.5px;background:#dc4677"></div>
<div class="a vl" style="left:486.3px;top:499.2px">-2.2%</div>
<div class="a rl" style="left:425.5px;top:516.4px">3-5 Years</div>
<div class="a" style="left:490.2px;top:519.6px;width:38.4px;height:5.5px;background:#dc4677"></div>
<div class="a vl" style="left:472.7px;top:518.1px">-4.5%</div>
<div class="a ct" style="left:621.8px;top:440px">Relative Exposure by Country</div>
<div class="a" style="left:724.2px;top:454px;width:0;height:98px;border-left:1px dotted #d9d9d9"></div>
<div class="a rl" style="left:621.8px;top:461.1px">Switzerland</div>
<div class="a" style="left:725.0px;top:462.7px;width:46.3px;height:5.5px;background:#80dcae"></div>
<div class="a vl" style="left:775.2px;top:463.2px">+3.8%</div>
<div class="a rl" style="left:621.8px;top:480.8px">Japan</div>
<div class="a" style="left:725.0px;top:481.8px;width:39.9px;height:5.5px;background:#80dcae"></div>
<div class="a vl" style="left:768.0px;top:481.8px">+2.7%</div>
<div class="a rl" style="left:621.8px;top:499.1px">Brazil</div>
<div class="a" style="left:725.0px;top:501.8px;width:31.6px;height:5.5px;background:#80dcae"></div>
<div class="a vl" style="left:759.4px;top:502.7px">+2.2%</div>
<div class="a rl" style="left:621.8px;top:518.1px">United States</div>
<div class="a" style="left:725.0px;top:520.2px;width:23.9px;height:5.5px;background:#80dcae"></div>
<div class="a vl" style="left:751.5px;top:520.9px">+1.9%</div>
<div class="a rl" style="left:621.8px;top:537.5px">South Korea</div>
<div class="a" style="left:725.0px;top:539.1px;width:11.8px;height:5.5px;background:#80dcae"></div>
<div class="a vl" style="left:739.7px;top:538.9px">+1.1%</div>
<!--/BARS-->
</body></html>
